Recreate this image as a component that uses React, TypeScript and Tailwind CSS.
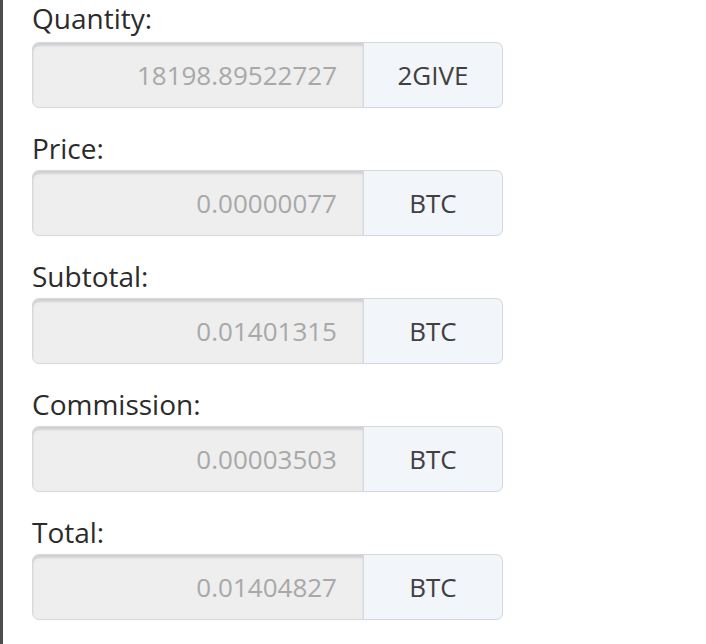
import React from 'react';

const rows = [
  { label: 'Quantity:', value: '18198.89522727', unit: '2GIVE' },
  { label: 'Price:', value: '0.00000077', unit: 'BTC' },
  { label: 'Subtotal:', value: '0.01401315', unit: 'BTC' },
  { label: 'Commission:', value: '0.00003503', unit: 'BTC' },
  { label: 'Total:', value: '0.01404827', unit: 'BTC' },
];

const App = () => {
  return (
    <div className="w-[706px] h-[644px] bg-white overflow-hidden">
      <div className="h-full border-l-[3px] border-[#4d4d4d] pl-[29px] font-['Open_Sans',sans-serif]">
        {rows.map((row, i) => (
          <div key={row.label} className="mb-[20px]">
            <label
              className={
                i === 0
                  ? 'block text-[28px] leading-[36px] text-[#2b2b2b] mb-[6px]'
                  : 'block text-[28px] leading-[36px] text-[#2b2b2b] pt-[2px] mb-[4px]'
              }
            >
              {row.label}
            </label>
            <div className="flex w-[471px] h-[66px]">
              <div className="flex-1 flex items-center justify-end pr-[26px] bg-[#eeeeee] border border-[#d3d8de] rounded-l-[7px] shadow-[inset_0_3px_2px_rgba(0,0,0,0.12)] text-[26px] text-[#a8a8a8]">
                {row.value}
              </div>
              <div className="w-[139px] flex items-center justify-center bg-[#f2f5fa] border border-l-0 border-[#d3d8de] rounded-r-[7px] text-[26px] text-[#404040]">
                {row.unit}
              </div>
            </div>
          </div>
        ))}
      </div>
    </div>
  );
};

export default App;
